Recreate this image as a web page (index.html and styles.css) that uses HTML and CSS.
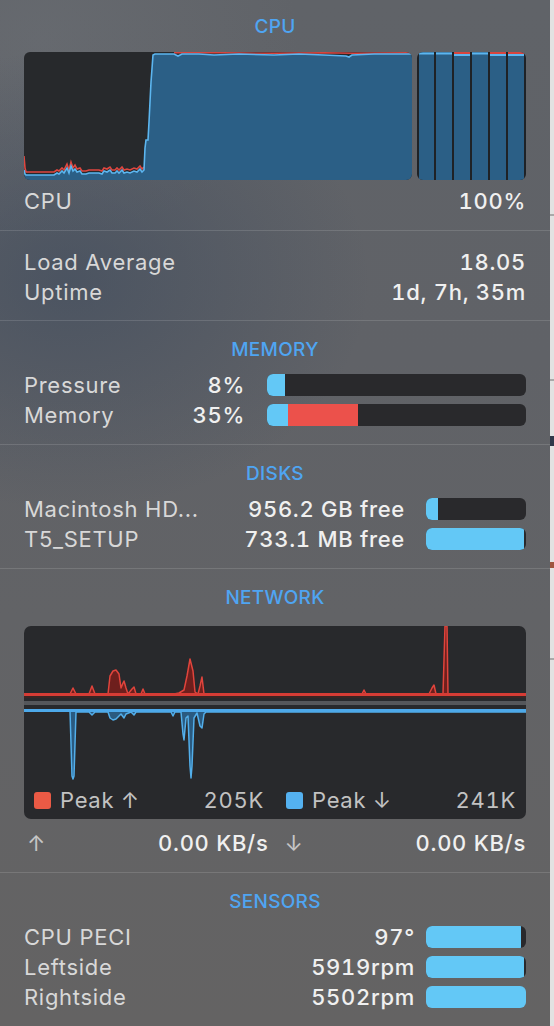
FILE: index.html
```html
<!DOCTYPE html>
<html>
<head>
<meta charset="utf-8">
<link rel="stylesheet" href="styles.css">
</head>
<body>
<div class="screen">
  <div class="panel">
    <section class="sec sec-cpu">
      <h2 class="title">CPU</h2>
      <div class="cpu-graphs">
        <div class="graph-box cpu-main">
          <svg viewBox="0 0 388 128" preserveAspectRatio="none">
            <rect width="388" height="128" fill="#27292c"/>
            <polygon fill="#2b5f86" points="0,128 0,118 1,122 2,123 30,123 33,121 35,122 38,119 40,121 43,116 45,121 47,114 49,119 51,117 53,120 56,119 58,122 62,122 65,121 70,121 75,121 78,122 80,119 83,120 86,118 88,121 91,121 93,119 95,121 98,118 100,121 103,120 106,121 110,119 113,120 116,117 118,120 120,118 121,96 122,88 124,88 125,70 127,30 129,3 131,2 150,2 154,4 158,2 175,2 190,3 215,2 250,3 275,2 300,3 322,4 325,5 328,3 350,2 388,2 388,128"/>
            <polyline fill="none" stroke="#e0463f" stroke-width="1.6" points="0,104 1,116 2,120 30,120 33,118 35,119 38,116 40,118 43,112 45,118 47,110 49,116 51,113 53,117 56,116 58,119 62,119 65,118 70,118 75,118 78,119 80,116 83,117 86,115 88,118 91,118 93,116 95,118 98,115 100,118 103,117 106,118 110,116 113,117 116,114 118,117 120,115"/>
            <polyline fill="none" stroke="#d8443e" stroke-width="1.4" points="150,0.8 200,0.8 250,1.3 300,0.8 330,1.3 388,0.8"/>
            <polyline fill="none" stroke="#5cb6f0" stroke-width="1.6" points="0,118 1,122 2,123 30,123 33,121 35,122 38,119 40,121 43,116 45,121 47,114 49,119 51,117 53,120 56,119 58,122 62,122 65,121 70,121 75,121 78,122 80,119 83,120 86,118 88,121 91,121 93,119 95,121 98,118 100,121 103,120 106,121 110,119 113,120 116,117 118,120 120,118 121,96 122,88 124,88 125,70 127,30 129,3 131,2 150,2 154,4 158,2 175,2 190,3 215,2 250,3 275,2 300,3 322,4 325,5 328,3 350,2 388,2"/>
          </svg>
        </div>
        <div class="graph-box cpu-cores">
          <svg viewBox="0 0 109 128" preserveAspectRatio="none">
            <rect width="109" height="128" fill="#1f2226"/>
            <rect x="2" y="0" width="15" height="128" fill="#2b5f86"/>
            <rect x="19" y="0" width="16" height="128" fill="#2b5f86"/>
            <rect x="37" y="0" width="16" height="128" fill="#2b5f86"/>
            <rect x="55" y="0" width="16" height="128" fill="#2b5f86"/>
            <rect x="73" y="0" width="16" height="128" fill="#2b5f86"/>
            <rect x="91" y="0" width="16" height="128" fill="#2b5f86"/>
            <rect x="2" y="0.5" width="15" height="2" fill="#5cb6f0"/>
            <rect x="19" y="0.5" width="16" height="2" fill="#5cb6f0"/>
            <rect x="37" y="0" width="16" height="2" fill="#d8443e"/>
            <rect x="37" y="2" width="16" height="2" fill="#5cb6f0"/>
            <rect x="55" y="0.5" width="16" height="2" fill="#5cb6f0"/>
            <rect x="73" y="0" width="16" height="2" fill="#d8443e"/>
            <rect x="73" y="2" width="16" height="2" fill="#5cb6f0"/>
            <rect x="91" y="0" width="16" height="2" fill="#d8443e"/>
            <rect x="91" y="2" width="16" height="2" fill="#5cb6f0"/>
          </svg>
        </div>
      </div>
      <div class="row cpu-row"><span class="label">CPU</span><span class="val">100%</span></div>
    </section>

    <section class="sec sec-sys">
      <div class="row"><span class="label">Load Average</span><span class="val">18.05</span></div>
      <div class="row"><span class="label">Uptime</span><span class="val">1d, 7h, 35m</span></div>
    </section>

    <section class="sec">
      <h2 class="title">MEMORY</h2>
      <div class="rows">
        <div class="meter mem">
          <div class="lv"><span class="label">Pressure</span><span class="val">8%</span></div>
          <div class="bar"><span class="fill blue" style="width:18px"></span></div>
        </div>
        <div class="meter mem">
          <div class="lv"><span class="label">Memory</span><span class="val">35%</span></div>
          <div class="bar"><span class="fill blue" style="width:21px"></span><span class="fill red" style="width:70px"></span></div>
        </div>
      </div>
    </section>

    <section class="sec">
      <h2 class="title">DISKS</h2>
      <div class="rows">
        <div class="meter disk">
          <div class="lv"><span class="label">Macintosh HD...</span><span class="val">956.2 GB free</span></div>
          <div class="bar"><span class="fill blue" style="width:12px"></span></div>
        </div>
        <div class="meter disk">
          <div class="lv"><span class="label">T5_SETUP</span><span class="val">733.1 MB free</span></div>
          <div class="bar"><span class="fill blue" style="width:98px"></span></div>
        </div>
      </div>
    </section>

    <section class="sec">
      <h2 class="title">NETWORK</h2>
      <div class="net-graph">
        <svg viewBox="0 0 502 193" preserveAspectRatio="none">
          <path fill="#6e1f1d" stroke="#e0443c" stroke-width="1.5" stroke-linejoin="round" d="M0,68 L46,68 L49,62 L52,68 L65,68 L68,60 L71,68 L84,68 L86,50 L89,45 L92,44 L95,48 L97,62 L99,57 L100,55 L102,62 L104,68 L108,63 L110,61 L112,68 L117,68 L119,63 L121,68 L150,68 L155,67 L160,64 L163,50 L166,33 L169,45 L171,66 L174,68 L176,60 L178,51 L180,68 L338,68 L340,64 L342,68 L405,68 L408,62 L410,59 L412,68 L419,68 L421,0 L423,0 L424,68 L502,68 L502,70 L0,70 Z"/>
          <rect x="0" y="67" width="502" height="3" fill="#d63c35"/>
          <rect x="0" y="70" width="502" height="2" fill="#3a2524"/>
          <rect x="0" y="75" width="502" height="4" fill="#55575b"/>
          <path fill="#2a5a80" stroke="#52aeea" stroke-width="1.5" stroke-linejoin="round" d="M0,85 L46,85 L48,150 L49,153 L50,150 L52,86 L65,86 L68,89 L71,86 L84,86 L86,92 L89,94 L92,93 L95,90 L97,88 L100,92 L102,88 L107,86 L110,89 L112,86 L147,86 L149,90 L151,86 L157,86 L159,108 L160,114 L162,92 L164,90 L166,140 L167,152 L168,140 L170,92 L173,87 L176,100 L178,102 L180,88 L182,86 L502,86 L502,84 L0,84 Z"/>
          <rect x="0" y="83" width="502" height="3" fill="#4da9ea"/>
        </svg>
        <div class="legend">
          <div class="leg"><span class="sw sw-red"></span><span>Peak ↑</span><span class="num">205K</span></div>
          <div class="leg"><span class="sw sw-blue"></span><span>Peak ↓</span><span class="num">241K</span></div>
        </div>
      </div>
      <div class="net-rates">
        <div class="half"><span class="arrow">↑</span><span class="val">0.00 KB/s</span></div>
        <div class="half"><span class="arrow">↓</span><span class="val">0.00 KB/s</span></div>
      </div>
    </section>

    <section class="sec sec-last">
      <h2 class="title">SENSORS</h2>
      <div class="rows">
        <div class="meter sensor">
          <div class="lv"><span class="label">CPU PECI</span><span class="val">97°</span></div>
          <div class="bar"><span class="fill blue" style="width:95px"></span></div>
        </div>
        <div class="meter sensor">
          <div class="lv"><span class="label">Leftside</span><span class="val">5919rpm</span></div>
          <div class="bar"><span class="fill blue" style="width:98px"></span></div>
        </div>
        <div class="meter sensor">
          <div class="lv"><span class="label">Rightside</span><span class="val">5502rpm</span></div>
          <div class="bar"><span class="fill blue" style="width:100px"></span></div>
        </div>
      </div>
    </section>
  </div>
  <div class="desk"></div>
</div>
</body>
</html>
```

FILE: styles.css
```css
* { box-sizing: border-box; margin: 0; padding: 0; }
html, body { margin: 0; width: 554px; height: 1026px; overflow: hidden; }
body {
  font-family: Inter, "Noto Sans", sans-serif;
  background: #dcdcdc;
}
.screen { display: flex; height: 1026px; }
.panel {
  width: 550px;
  flex: none;
  color: #d9d9d9;
  background:
    radial-gradient(ellipse 300px 230px at 70px 280px, rgba(58, 72, 92, 0.55), rgba(58, 72, 92, 0) 100%),
    radial-gradient(ellipse 260px 200px at 40px 40px, rgba(120, 125, 132, 0.25), rgba(120, 125, 132, 0) 100%),
    linear-gradient(180deg, #606368 0%, #606267 35%, #626366 60%, #646363 100%);
}
.desk {
  flex: 1;
  background:
    linear-gradient(180deg,
      #e2e2e2 0, #e2e2e2 214px, #a9a9a9 214px, #a9a9a9 216px,
      #e2e2e2 216px, #e2e2e2 379px, #a9a9a9 379px, #a9a9a9 381px,
      #e2e2e2 381px, #e2e2e2 436px, #30384a 436px, #30384a 446px,
      #e2e2e2 446px, #e2e2e2 562px, #a0553f 562px, #a0553f 568px,
      #e2e2e2 568px, #e2e2e2 658px, #a9a9a9 658px, #a9a9a9 660px,
      #e2e2e2 660px);
}
.sec {
  padding: 19px 24px 14px 24px;
  border-bottom: 1px solid rgba(255, 255, 255, 0.13);
}
.sec-cpu { padding-top: 17px; }
.sec-sys { padding-top: 16px; padding-bottom: 13px; }
.sec-last { border-bottom: none; }

.title {
  font-size: 19px;
  line-height: 20px;
  font-weight: 500;
  color: #4fa5f2;
  text-align: center;
  letter-spacing: 0.3px;
}
.rows { margin-top: 10px; }
.row {
  display: flex;
  justify-content: space-between;
  font-size: 22px;
  line-height: 30px;
  height: 30px;
  letter-spacing: 0.7px;
}
.label { color: #d8d8d8; }
.val { color: #f0f0f0; font-weight: 500; font-variant-numeric: tabular-nums; }

.cpu-graphs { display: flex; gap: 5px; margin-top: 15px; height: 128px; }
.graph-box { border-radius: 6px; overflow: hidden; height: 128px; }
.graph-box svg { display: block; width: 100%; height: 100%; }
.cpu-main { width: 388px; }
.cpu-cores { width: 109px; }
.cpu-row { margin-top: 6px; }

.meter {
  display: grid;
  grid-template-columns: 1fr 259px;
  column-gap: 22px;
  align-items: center;
  height: 30px;
  font-size: 22px;
  line-height: 30px;
  letter-spacing: 0.7px;
}
.meter.disk { grid-template-columns: 1fr 100px; column-gap: 21px; }
.meter.sensor { grid-template-columns: 1fr 100px; column-gap: 11px; }
.lv { display: flex; justify-content: space-between; white-space: nowrap; }
.bar {
  height: 22px;
  border-radius: 6px;
  background: #29292c;
  overflow: hidden;
  display: flex;
}
.fill { height: 100%; flex: none; }
.fill.blue { background: #63c8f6; }
.fill.red { background: #ec514b; }

.net-graph {
  position: relative;
  margin-top: 18px;
  height: 193px;
  border-radius: 7px;
  background: #28292c;
  overflow: hidden;
  display: flex;
  align-items: flex-end;
  padding: 0 10px 8px 10px;
}
.net-graph svg { position: absolute; left: 0; top: 0; width: 100%; height: 100%; display: block; }
.legend {
  position: relative;
  width: 100%;
  display: grid;
  grid-template-columns: 1fr 1fr;
  column-gap: 22px;
  font-size: 22px;
  line-height: 22px;
  color: #c2c2c2;
  letter-spacing: 0.7px;
  font-variant-numeric: tabular-nums;
}
.leg { display: flex; align-items: center; }
.sw { width: 17px; height: 17px; border-radius: 3px; margin-right: 9px; flex: none; }
.sw-red { background: #ea5a45; }
.sw-blue { background: #54b1f0; }
.leg .num { margin-left: auto; }

.net-rates {
  display: grid;
  grid-template-columns: 1fr 1fr;
  column-gap: 13px;
  margin-top: 9px;
  font-size: 22px;
  line-height: 30px;
  height: 30px;
  letter-spacing: 0.7px;
}
.half { display: flex; justify-content: space-between; }
.arrow { color: #c6c6c6; padding-left: 3px; }
```
